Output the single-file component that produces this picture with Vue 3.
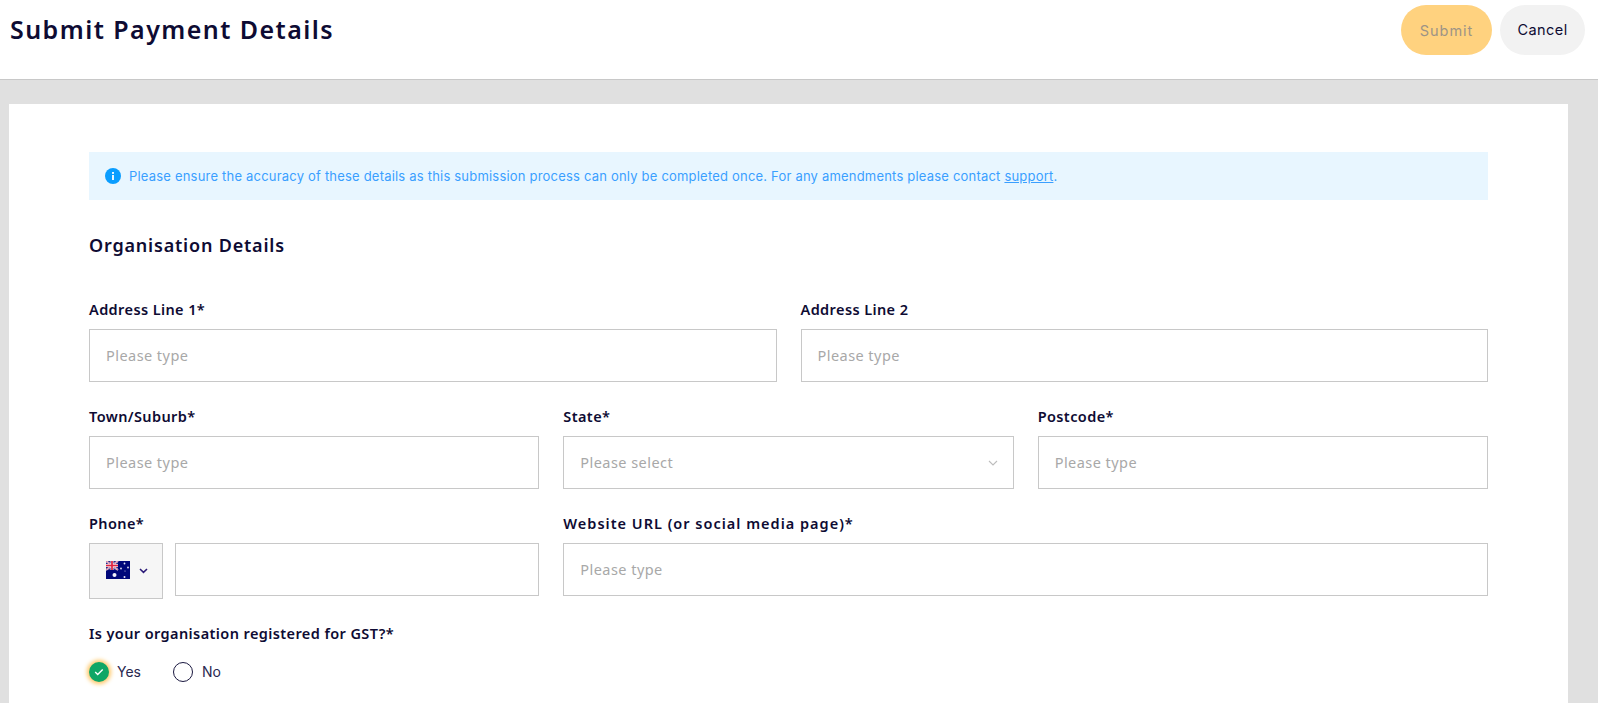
<script setup>
const rows = [
  { cols: 'two', fields: [
    { label: 'Address Line 1*' },
    { label: 'Address Line 2' },
  ]},
]
</script>

<template>
  <div class="page">
    <header class="top">
      <h1 class="title">Submit Payment Details</h1>
      <div class="actions">
        <button class="btn submit" type="button"><span>Submit</span></button>
        <button class="btn cancel" type="button">Cancel</button>
      </div>
    </header>
    <main class="canvas">
      <section class="card">
        <div class="alert">
          <svg class="info" width="16" height="16" viewBox="0 0 16 16">
            <circle cx="8" cy="8" r="8" fill="#0a9dff" />
            <rect x="7.1" y="7" width="1.8" height="5" fill="#fff" />
            <rect x="7.1" y="4" width="1.8" height="1.9" fill="#fff" />
          </svg>
          <p>Please ensure the accuracy of these details as this submission process can only be completed once. For any amendments please contact <a href="#">support</a>.</p>
        </div>
        <h2 class="section">Organisation Details</h2>

        <div class="row two">
          <label v-for="f in rows[0].fields" :key="f.label" class="field">
            <span class="lab">{{ f.label }}</span>
            <input class="inp" placeholder="Please type" />
          </label>
        </div>

        <div class="row three">
          <label class="field">
            <span class="lab">Town/Suburb*</span>
            <input class="inp" placeholder="Please type" />
          </label>
          <label class="field">
            <span class="lab">State*</span>
            <div class="selectwrap">
              <select class="inp sel"><option>Please select</option></select>
              <svg class="chev" width="10" height="6" viewBox="0 0 10 6"><path d="M1 1l4 4 4-4" fill="none" stroke="#bdbdbd" stroke-width="1.1" /></svg>
            </div>
          </label>
          <label class="field">
            <span class="lab">Postcode*</span>
            <input class="inp" placeholder="Please type" />
          </label>
        </div>

        <div class="row three">
          <div class="field">
            <span class="lab">Phone*</span>
            <div class="phone">
              <button class="country" type="button">
                <svg width="24" height="18" viewBox="0 0 24 18">
                  <rect width="24" height="18" fill="#00087a" />
                  <rect width="12" height="9" fill="#2a2a8a" />
                  <path d="M0 0l12 9M12 0L0 9" stroke="#e8e0ee" stroke-width="1.8" />
                  <path d="M0 0l12 9M12 0L0 9" stroke="#d83a5c" stroke-width=".6" />
                  <path d="M6 0v9M0 4.5h12" stroke="#f0e0e8" stroke-width="3" />
                  <path d="M6 0v9M0 4.5h12" stroke="#e0233f" stroke-width="1.7" />
                  <circle cx="8.5" cy="14" r="2" fill="#f2f2fa" />
                  <circle cx="18.5" cy="2.5" r=".9" fill="#e6e6f4" />
                  <circle cx="15" cy="7.5" r=".9" fill="#e6e6f4" />
                  <circle cx="22" cy="6.5" r=".9" fill="#e6e6f4" />
                  <circle cx="19" cy="10" r=".6" fill="#c8c8e4" />
                  <circle cx="18.5" cy="16" r="1" fill="#e6e6f4" />
                </svg>
                <svg width="9" height="6" viewBox="0 0 9 6"><path d="M1 1l3.5 3.4L8 1" fill="none" stroke="#2b1a78" stroke-width="1.5" /></svg>
              </button>
              <input class="inp num" />
            </div>
          </div>
          <label class="field wide">
            <span class="lab lab-url">Website URL (or social media page)*</span>
            <input class="inp" placeholder="Please type" />
          </label>
        </div>

        <div class="gst">
          <span class="lab">Is your organisation registered for GST?*</span>
          <div class="radios">
            <label class="radio">
              <span class="dot on">
                <svg width="10" height="8" viewBox="0 0 10 8"><path d="M1.2 4l2.5 2.4 5-5" fill="none" stroke="#fff" stroke-width="1.4" /></svg>
              </span>
              Yes
            </label>
            <label class="radio">
              <span class="dot"></span>
              No
            </label>
          </div>
        </div>
      </section>
    </main>
  </div>
</template>

<style>
html, body { margin: 0; height: 703px; overflow: hidden; background: #e0e0e0; }
</style>

<style scoped>
.page { height: 703px; overflow: hidden; display: flex; flex-direction: column; color: #0e0b33; font-family: "Inter", sans-serif; }
.top { height: 79px; flex: none; box-sizing: content-box; background: #fff; border-bottom: 1px solid #c8c8c8; display: flex; align-items: flex-start; justify-content: space-between; padding: 0 13px 0 10px; }
.title { margin: 16px 0 0; font: 600 25px/26px "Noto Sans", sans-serif; letter-spacing: 1.45px; color: #0e0b33; }
.actions { display: flex; gap: 8px; padding-top: 5px; }
.btn { height: 50px; border: 0; border-radius: 25px; font: 400 14.5px "Inter", sans-serif; letter-spacing: .45px; padding: 0; }
.submit { width: 91px; background: #ffd27f; color: #9d9486; letter-spacing: 1px; }
.cancel { width: 85px; background: #f2f2f2; color: #0e0b33; padding-bottom: 2px; }
.canvas { flex: 1; min-height: 0; background: #e0e0e0; padding: 24px 30px 0 9px; }
.card { background: #fff; padding: 48px 80px 0; height: 100%; box-sizing: content-box; }
.alert { height: 48px; background: #e8f6ff; display: flex; align-items: center; gap: 8px; padding: 0 16px; font-size: 13px; color: #3a9fff; }
.alert p { margin: 0; letter-spacing: .2px; }
.alert a { color: inherit; }
.info { flex: none; }
.section { margin: 34px 0 0; font: 600 18px/22px "Noto Sans", sans-serif; letter-spacing: .8px; color: #0e0b33; }
.row { display: grid; column-gap: 24px; }
.two { grid-template-columns: 1fr 1fr; margin-top: 44px; }
.three { grid-template-columns: repeat(3, 1fr); margin-top: 25px; }
.field { display: flex; flex-direction: column; gap: 11px; min-width: 0; }
.wide { grid-column: span 2; }
.lab { font: 600 14.5px/18px "Noto Sans", sans-serif; letter-spacing: .4px; color: #0e0b33; }
.lab-url { letter-spacing: 1px; }
.inp { box-sizing: border-box; width: 100%; height: 53px; border: 1px solid #c8c8c8; background: #fff; padding: 0 16px 2px; font: 400 14.5px "Noto Sans", sans-serif; letter-spacing: .45px; color: #a8a8a8; outline: 0; border-radius: 0; }
.inp::placeholder { color: #a8a8a8; opacity: 1; }
.selectwrap { position: relative; }
.sel { appearance: none; display: block; }
.chev { position: absolute; right: 16px; top: 24px; }
.phone { display: flex; gap: 12px; align-items: flex-start; }
.country { flex: none; width: 74px; height: 56px; box-sizing: border-box; background: #f6f6f6; border: 1px solid #c8c8c8; display: flex; align-items: center; gap: 9px; padding: 0 0 0 16px; margin: 0; }
.country svg:first-child { margin-top: -3px; }
.num { flex: 1; min-width: 0; }
.gst { margin-top: 24px; }
.radios { display: flex; gap: 32px; margin-top: 19px; }
.radio { display: flex; align-items: center; gap: 9px; font: 400 14px/20px "Inter", sans-serif; color: #2a2850; }
.dot { width: 20px; height: 20px; box-sizing: border-box; border-radius: 50%; border: 1.5px solid #1a1840; display: flex; align-items: center; justify-content: center; }
.radio:first-child { gap: 8px; }
.dot.on { background: #10a666; border: 0; box-shadow: 0 0 4px 2px #ffc766; }
</style>
